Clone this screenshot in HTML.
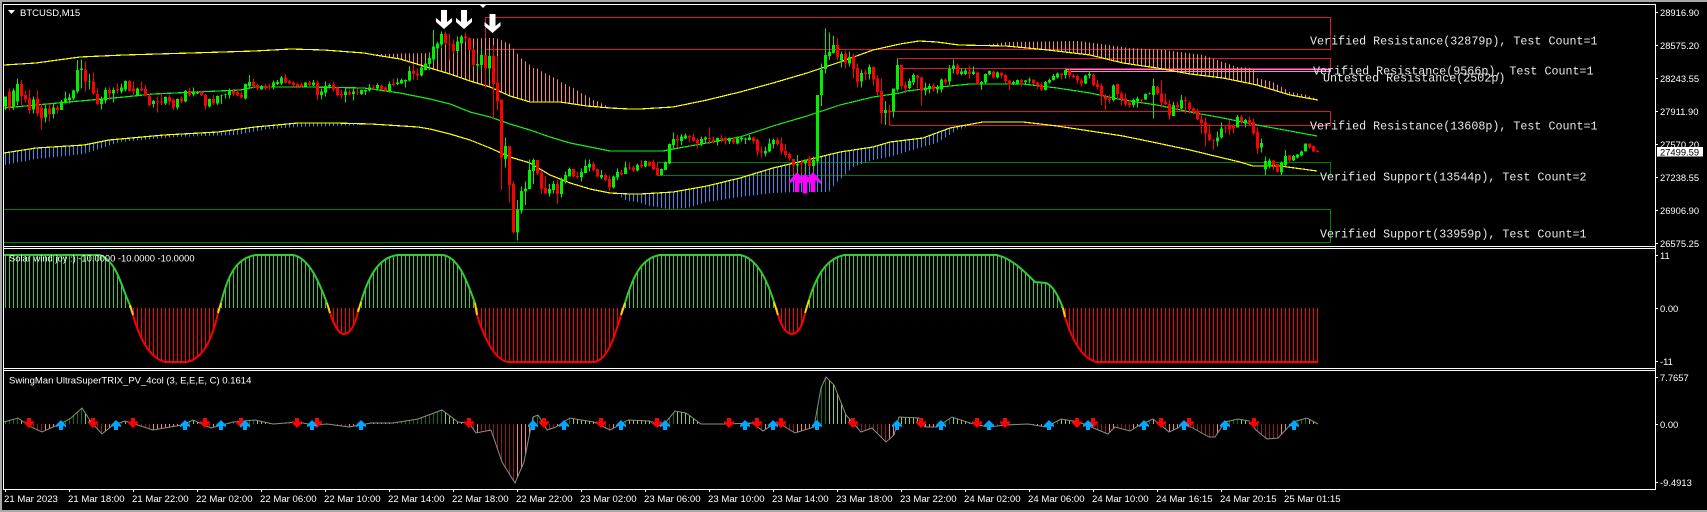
<!DOCTYPE html>
<html><head><meta charset="utf-8"><title>BTCUSD,M15</title>
<style>
html,body{margin:0;padding:0;background:#000;width:1707px;height:512px;overflow:hidden}
svg{display:block;position:absolute;left:0;top:0}
text{font-family:"Liberation Sans",sans-serif;fill:#fff}
.ax{font-size:9.4px}
.xl{font-size:9.6px}
.t{font-size:9.5px}
.m{font-family:"Liberation Mono",monospace;font-size:11.7px;fill:#e8e8e8}
.l{fill:none;shape-rendering:crispEdges;stroke-width:1.2}
</style></head><body>
<svg width="1707" height="512" viewBox="0 0 1707 512" xmlns="http://www.w3.org/2000/svg">
<defs>
<clipPath id="or"><polygon points="378,54 429,53 433,49 441,48 445,43 449,40 465,39 485,38 495,38 501,40 505,42 509,43 513,48 517,53 521,58 525,61 529,64 533,68 537,68 541,71 545,73 549,75 553,77 557,79 561,82 565,84 569,86 573,88 577,90 581,93 585,95 589,97 593,100 597,101 601,103 605,105 609,107 613,108 610,108 587,106 560,102 530,102 510,96 490,87 470,81 450,74 430,68 400,59 375,55"/><polygon points="985,45 1006,42 1079,41 1130,48 1165,50 1203,55 1223,62 1237,67 1253,68 1257,78 1273,82 1290,92 1307,95 1318,100 1290,95 1257,85 1223,78 1190,74 1157,68 1123,63 1090,55 1048,50 1006,46"/></clipPath>
<clipPath id="bl"><polygon points="4,153 36,148 84,145 109,140 164,135 218,132 255,127 298,123 335,123 364,124 364,125 298,127 269,129 236,135 175,137 120,142 84,154 36,159 4,165"/><polygon points="617,194 640,194 657,193 673,192 707,186 740,178 773,168 807,160 840,152 873,147 890,142 923,138 950,128 970,124 970,126 957,130 937,143 919,148 893,156 873,160 853,167 843,177 836,183 829,192 797,192 773,193 740,197 707,202 687,208 669,209 649,206 641,203 625,200"/></clipPath>
<clipPath id="sw"><path d="M4 255H100C118 262 122 290 130 305L133 315C140 340 150 358 165 362H187C205 358 213 335 218 313L221 303C228 275 236 258 256 255H293C310 258 320 285 327 303L330 313C335 328 340 334 344 334C349 334 354 328 358 312L361 302C368 278 378 257 398 255H443C460 258 468 285 475 303L477 315C485 340 495 360 508 362H594C608 360 615 335 621 315L625 303C632 280 640 258 660 255H740C757 258 767 280 774 302L778 315C782 328 787 334 792 334C797 334 802 328 805 313L809 300C815 280 825 258 845 255H997L1003 257C1015 262 1025 272 1035 282L1046 283C1052 285 1058 295 1063 308L1065 317C1072 340 1082 358 1096 362H1318V308H4Z"/></clipPath>
<clipPath id="tr"><polygon points="4,422 18,418 31,427 42,432 62,423 71,418 82,408 91,422 102,434 113,425 125,421 153,430 182,425 193,420 211,428 233,422 255,420 273,424 298,422 313,425 327,424 349,427 371,423 393,423 418,419 442,410 458,422 469,423 476,433 491,430 502,462 515,483 524,462 533,417 538,415 547,430 556,427 570,418 581,420 594,422 610,430 628,420 650,421 657,427 666,422 675,411 686,413 701,424 726,424 752,423 763,431 777,422 795,433 814,427 821,388 826,377 834,385 846,415 861,432 872,428 886,442 894,435 899,417 919,418 925,427 937,427 952,417 970,423 988,427 1006,425 1028,424 1046,427 1061,419 1079,422 1108,434 1115,427 1130,431 1140,425 1153,419 1162,426 1169,432 1178,428 1184,423 1191,427 1209,437 1215,437 1225,422 1238,419 1249,421 1256,430 1267,439 1278,438 1293,422 1307,418 1318,424 1318,424 4,424"/></clipPath>
<clipPath id="ri"><path d="M4 340H18V500H4ZM42 340H82V500H42ZM102 340H125V500H102ZM153 340H193V500H153ZM211 340H255V500H211ZM273 340H298V500H273ZM349 340H371V500H349ZM393 340H442V500H393ZM476 340H479V500H476ZM515 340H538V500H515ZM556 340H570V500H556ZM610 340H628V500H610ZM657 340H675V500H657ZM763 340H777V500H763ZM795 340H826V500H795ZM886 340H899V500H886ZM925 340H952V500H925ZM1028 340H1061V500H1028ZM1108 340H1115V500H1108ZM1130 340H1153V500H1130ZM1169 340H1184V500H1169ZM1215 340H1238V500H1215ZM1278 340H1307V500H1278Z"/></clipPath>
<polygon id="dn" points="-2,0 2,0 2,4 5,3 5,5 0,10 -5,5 -5,3 -2,4" fill="#ff0000"/>
<polygon id="up" points="-2,10 2,10 2,6 5,7 5,5 0,0 -5,5 -5,7 -2,6" fill="#00a8ff"/>
<polygon id="wa" points="-3,0 3,0 3,12 8,8 8,12 0,19 -8,12 -8,8 -3,12" fill="#fff"/>
<polygon id="ma" points="-2.3,20 2.3,20 2.3,8 8,12 8,9 0,0 -8,9 -8,12 -2.3,8" fill="#ff00ff"/>
</defs>

<!-- window chrome -->
<rect x="0" y="0" width="1707" height="2" fill="#a8a8a8"/>
<rect x="0" y="0" width="2" height="512" fill="#a8a8a8"/>
<rect x="0" y="510" width="1707" height="2" fill="#a8a8a8"/>

<g shape-rendering="crispEdges" fill="none">
<!-- zones -->
<rect x="485.5" y="17.5" width="845" height="32" stroke="#dc143c"/>
<rect x="897.5" y="58.5" width="433" height="10" stroke="#dc143c"/>
<rect x="889.5" y="111.5" width="441" height="14" stroke="#dc143c"/>
<rect x="657.5" y="162.5" width="673" height="13" stroke="#008000"/>
<rect x="3.5" y="209.5" width="1327" height="33" stroke="#008000"/>
<rect x="1065.5" y="69.5" width="265" height="2" stroke="#ee82ee"/>
<!-- hist -->
<g clip-path="url(#or)"><line x1="5" x2="1320" y1="100" y2="100" stroke="#f7931e" stroke-width="200" stroke-dasharray="1 3"/></g>
<g clip-path="url(#bl)"><line x1="5" x2="1320" y1="150" y2="150" stroke="#2f8fee" stroke-width="200" stroke-dasharray="1 3"/></g>
</g>

<!-- band lines -->
<polyline class="l" stroke="#ffff00" points="4,65 36,63 80,57 124,55 191,53 255,51 291,49 324,50 364,53 375,55 400,59 430,68 450,74 470,81 490,87 510,96 530,102 560,102 587,106 610,108 630,109 640,109 673,107 707,100 740,92 773,83 807,73 840,62 873,50 900,44 919,41 937,42 959,45 1006,46 1048,50 1090,55 1123,63 1157,68 1190,74 1223,78 1257,85 1290,95 1318,100"/>
<polyline class="l" stroke="#10f010" points="4,108 36,105 80,101 124,97 153,94 240,90 255,87 309,87 364,88 400,93 430,99 450,104 470,112 490,117 510,124 530,130 550,137 570,143 590,147 610,151 640,151 663,151 673,149 707,143 740,137 773,126 807,116 840,105 873,97 900,93 907,91 940,87 970,84 1023,84 1057,88 1090,93 1123,100 1157,105 1190,112 1223,118 1257,125 1290,131 1317,136"/>
<polyline class="l" stroke="#ffff00" points="4,153 36,148 84,145 109,140 164,135 218,132 255,127 298,123 335,123 371,124 418,127 430,129 450,134 470,140 490,148 510,157 530,163 550,175 570,183 590,189 610,193 630,194 640,194 657,193 673,192 707,186 740,178 773,168 807,160 840,152 873,147 890,142 923,138 950,128 983,122 1023,122 1057,126 1090,131 1123,136 1157,143 1190,150 1223,158 1240,162 1253,166 1280,166 1317,171"/>

<!-- candles A -->
<g transform="translate(4.17,50) scale(.33333)" fill="none" shape-rendering="crispEdges">
<path stroke="#00f000" stroke-width="3" d="M4 140V180M28 115V180M40 85V165M88 140V190M124 165V218M148 160V205M172 150V180M184 125V160M196 130V160M208 118V150M220 30V130M232 28V115M256 72V118M292 140V178M304 112V160M328 112V158M352 100V130M364 92V125M400 112V140M448 150V172M484 140V165M520 145V178M544 120V158M568 113V140M580 123V132M616 145V172M640 137V165M652 133V162M664 130V145M676 115V145M724 100V148M736 75V115M772 105V120M808 92V118M820 90V105M832 78V105M904 96V110M928 90V108M952 115V148M964 95V140M976 100V115M1024 115V158M1048 115V152M1072 118V135M1084 118V135M1096 102V125M1120 100V118M1156 95V128M1180 85V105M1192 85V102M1204 88V112M1216 48V95M1252 48V80M1264 35V62M1276 10V60"/>
<path stroke="#00f000" stroke-width="9" d="M4 140V170M28 122V172M40 102V155M88 148V178M124 175V202M148 172V192M172 155V180M184 145V158M196 142V150M208 122V145M220 60V125M232 55V60M256 93V95M292 148V162M304 120V152M328 120V130M352 112V125M364 93V118M400 115V135M448 153V162M484 141V160M520 147V172M544 123V155M568 127V133M580 126V130M616 147V170M640 138V160M652 135V137M664 133V135M676 123V135M724 102V145M736 96V108M772 108V118M808 98V112M820 96V102M832 82V100M904 97V110M928 97V105M952 125V135M964 108V128M976 105V110M1024 125V135M1048 125V132M1072 120V132M1084 120V125M1096 112V122M1120 105V115M1156 102V125M1180 97V102M1192 90V100M1204 90V95M1216 63V92M1252 53V76M1264 40V60M1276 24V42"/>
<path stroke="#ff0000" stroke-width="3" d="M16 115V182M52 90V165M64 122V158M76 120V190M100 122V200M112 160V240M136 160V215M160 165V190M244 35V125M268 68V135M280 115V165M316 112V150M340 100V130M376 90V125M388 95V135M412 95V125M424 105V140M436 130V170M460 140V188M472 130V165M496 135V165M508 145V180M532 140V160M556 113V140M592 122V138M604 132V178M628 135V165M688 120V140M700 120V140M712 125V146M748 85V115M760 100V120M784 100V120M796 100V120M844 72V100M856 90V103M868 95V110M880 98V115M892 98V112M916 93V108M940 92V150M988 95V125M1000 108V140M1012 118V145M1036 118V135M1060 115V135M1108 105V120M1132 103V120M1144 110V125M1168 85V110M1228 40V90M1240 55V90"/>
<path stroke="#ff0000" stroke-width="9" d="M16 125V172M52 102V138M64 135V148M76 145V180M100 145V190M112 172V205M136 175V192M160 172V180M244 58V95M268 95V130M280 132V162M316 120V130M340 117V122M376 93V123M388 115V125M412 115V122M424 117V135M436 137V165M460 155V158M472 155V158M496 141V155M508 150V172M532 146V155M556 123V135M592 125V135M604 135V168M628 147V160M688 123V132M700 126V137M712 133V143M748 96V108M760 105V115M784 108V115M796 110V113M844 82V97M856 93V100M868 97V105M880 102V110M892 103V110M916 97V105M940 97V135M988 103V118M1000 113V135M1012 132V136M1036 127V133M1060 126V128M1108 112V115M1132 107V118M1144 113V122M1168 100V105M1228 63V72M1240 70V76"/>
</g>
<!-- candles B -->
<g transform="translate(430.17,0) scale(.33333)" fill="none" shape-rendering="crispEdges">
<path stroke="#00f000" stroke-width="3" d="M10 90V190M22 125V180M34 95V140M82 110V165M94 105V130M142 160V215M154 145V215M178 150V235M226 412V503M262 600V722M274 560V640M286 545V615M298 478V568M310 475V552M358 552V590M370 543V580M394 533V593M406 515V550M418 503V530M454 505V545M466 478V520M478 478V515M514 510V537M550 527V565M562 505V540M586 485V522M622 490V515M646 482V502"/>
<path stroke="#00f000" stroke-width="9" d="M10 140V178M22 130V145M34 102V133M82 125V153M94 110V130M142 192V197M154 165V195M178 168V205M226 438V477M262 628V698M274 573V632M286 565V575M298 510V567M310 480V513M358 567V580M370 552V570M394 541V582M406 525V543M418 507V530M454 516V532M466 498V519M478 492V502M514 525V532M550 530V562M562 516V532M586 502V522M622 495V512M646 483V500"/>
<path stroke="#ff0000" stroke-width="3" d="M46 95V135M58 100V180M70 120V160M106 98V125M118 112V152M130 145V200M166 165V265M190 135V358M202 170V332M214 298V570M238 438V608M250 545V700M322 480V525M334 512V582M346 528V582M382 540V612M430 507V532M442 516V537M490 484V515M502 507V532M526 520V545M538 527V572M574 510V527M598 487V510M610 498V516M634 480V505M658 484V500"/>
<path stroke="#ff0000" stroke-width="9" d="M46 102V130M58 130V133M70 132V155M106 110V116M118 114V150M130 148V195M166 165V205M190 168V252M202 247V305M214 298V473M238 438V555M250 552V696M322 480V520M334 517V567M346 564V580M382 552V582M430 507V530M442 528V531M490 492V510M502 507V530M526 525V540M538 537V562M574 517V524M598 502V506M610 502V512M634 495V500M658 484V498"/>
</g>
<!-- candles C -->
<g transform="translate(640.17,20) scale(.33333)" fill="none" shape-rendering="crispEdges">
<path stroke="#00f000" stroke-width="3" d="M64 445V466M76 425V450M88 370V432M100 337V385M124 342V375M136 340V357M184 350V378M196 350V372M232 352V377M268 353V372M292 350V373M304 348V365M316 352V372M328 345V362M376 380V410M388 355V397M400 355V385M472 405V460M496 418V458M520 410V452M532 225V428M544 130V258M556 25V160M568 37V120M580 48V100M604 95V143M628 95V140M664 148V203M688 133V178M736 243V315"/>
<path stroke="#00f000" stroke-width="9" d="M64 447V465M76 426V450M88 372V430M100 357V375M124 350V363M136 347V355M184 357V372M196 353V358M232 354V366M268 354V365M292 356V370M304 354V358M316 355V358M328 353V360M376 393V400M388 370V395M400 360V372M472 432V437M496 418V430M520 420V438M532 225V425M544 150V225M556 105V147M568 96V108M580 75V99M604 102V122M628 111V130M664 159V185M688 141V162M736 270V279"/>
<path stroke="#ff0000" stroke-width="3" d="M40 418V450M52 430V467M112 345V382M148 345V368M160 340V365M172 355V385M208 323V372M220 350V370M244 345V367M256 350V373M280 354V372M340 350V370M352 355V410M364 380V413M412 352V378M424 353V403M436 372V412M448 397V422M460 417V460M484 420V460M508 408V440M592 55V120M616 92V145M640 100V175M652 130V203M676 148V182M700 140V197M712 165V228M724 175V312M748 255V313"/>
<path stroke="#ff0000" stroke-width="9" d="M40 426V448M52 444V466M112 357V362M148 348V353M160 351V363M172 360V371M208 354V358M220 358V363M244 354V358M256 354V362M280 358V368M340 353V363M352 360V395M364 395V398M412 360V372M424 370V395M436 393V405M448 402V415M460 417V437M484 430V433M508 415V438M592 75V113M616 102V128M640 108V147M652 144V186M676 158V162M700 141V178M712 175V216M724 213V279M748 272V278"/>
</g>
<!-- candles D -->
<g transform="translate(890.17,50) scale(.33333)" fill="none" shape-rendering="crispEdges">
<path stroke="#00f000" stroke-width="3" d="M10 115V203M22 25V125M58 85V118M70 70V105M106 98V137M118 100V130M142 105V130M154 85V128M178 45V105M190 28V70M214 55V77M226 55V75M250 50V75M274 93V120M286 70V100M298 62V75M322 65V85M370 92V105M382 88V105M406 90V103M418 82V100M466 93V122M478 85V100M490 72V92M502 68V85M526 55V85M586 73V102M598 63V85M670 103V155M730 145V172M742 140V172M766 130V150M778 128V134M790 85V205M850 155V198M874 135V177M982 245V290M994 217V265M1042 195V233M1066 207V232M1114 265V307M1126 320V375M1138 325V355M1174 335V375M1186 300V350M1210 315V333M1222 312V325M1234 302V318M1246 280V305"/>
<path stroke="#00f000" stroke-width="9" d="M10 115V185M22 45V118M58 93V114M70 75V97M106 112V122M118 108V117M142 112V118M154 88V118M178 57V95M190 47V57M214 65V72M226 62V72M250 65V72M274 96V102M286 72V98M298 63V73M322 67V82M370 96V102M382 90V102M406 91V96M418 88V92M466 96V120M478 90V98M490 78V90M502 71V83M526 60V75M586 76V100M598 72V77M670 107V150M730 150V165M742 145V153M766 132V148M778 130V132M790 108V135M850 165V198M874 150V175M982 262V275M994 235V263M1042 201V232M1066 210V220M1114 279V293M1126 333V358M1138 332V350M1174 337V368M1186 318V345M1210 318V332M1222 313V322M1234 304V317M1246 280V305"/>
<path stroke="#ff0000" stroke-width="3" d="M34 45V118M46 95V130M82 75V115M94 80V167M130 100V125M166 85V105M202 40V75M238 47V85M262 65V105M310 63V85M334 67V85M346 72V100M358 90V120M394 87V110M430 88V103M442 95V117M454 97V123M514 70V88M538 57V85M550 72V85M562 75V100M574 85V110M610 70V110M622 90V118M634 100V165M646 132V180M658 135V160M682 100V150M694 125V165M706 130V170M718 150V172M754 147V158M802 108V135M814 90V172M826 130V165M838 150V208M862 155V183M886 140V190M898 155V190M910 172V192M922 175V210M934 190V250M946 203V290M958 225V275M970 268V300M1006 225V250M1018 210V255M1030 222V250M1054 195V222M1078 200V230M1090 205V255M1102 232V312M1150 330V362M1162 340V367M1198 315V335M1258 280V295M1270 287V306M1282 301V308"/>
<path stroke="#ff0000" stroke-width="9" d="M34 45V108M46 105V116M82 77V84M94 82V122M130 107V118M166 88V97M202 47V72M238 65V72M262 67V102M310 64V83M334 67V77M346 75V93M358 91V103M394 90V97M430 89V101M442 97V107M454 104V118M514 71V75M538 60V77M550 76V81M562 78V92M574 91V100M610 75V105M622 102V111M634 108V140M646 140V148M658 145V150M682 102V132M694 130V148M706 145V163M718 158V165M754 148V152M802 109V130M814 130V158M826 155V163M838 162V197M862 165V173M886 150V153M898 157V178M910 175V186M922 185V208M934 208V219M946 216V250M958 250V270M970 268V272M1006 232V235M1018 228V238M1030 228V235M1054 201V215M1078 210V222M1090 216V250M1102 246V295M1150 331V346M1162 342V366M1198 317V332M1258 280V292M1270 288V305M1282 302V306"/>
</g>

<!-- white down arrows -->
<use href="#wa" x="444" y="10"/><use href="#wa" x="464" y="10"/><use href="#wa" x="492.5" y="14"/>
<polygon points="480,5 486,5 483,8" fill="#fff"/>
<!-- magenta up arrows -->
<use href="#ma" x="797" y="172"/><use href="#ma" x="813" y="172"/><use href="#ma" x="805" y="173.5"/>

<!-- Solar wind panel -->
<g clip-path="url(#sw)" shape-rendering="crispEdges">
<line x1="5" x2="1320" y1="281.5" y2="281.5" stroke="#32cd32" stroke-width="53" stroke-dasharray="1 3"/>
<line x1="5" x2="1320" y1="335" y2="335" stroke="#ff0000" stroke-width="54" stroke-dasharray="1 3"/>
</g>
<g fill="none" stroke-width="2">
<path stroke="#32cd32" d="M4 255H100C118 262 122 290 130 305M221 303C228 275 236 258 256 255H293C310 258 320 285 327 303M361 302C368 278 378 257 398 255H443C460 258 468 285 475 303M625 303C632 280 640 258 660 255H740C757 258 767 280 774 302M809 300C815 280 825 258 845 255H997L1003 257C1015 262 1025 272 1035 282L1046 283C1052 285 1058 295 1063 308"/>
<path stroke="#ffd700" d="M130 305L133 315M218 313L221 303M327 303L330 313M358 312L361 302M475 303L477 315M621 315L625 303M774 302L778 315M805 313L809 300M1063 308L1065 317"/>
<path stroke="#ff0000" d="M133 315C140 340 150 358 165 362H187C205 358 213 335 218 313M330 313C335 328 340 334 344 334C349 334 354 328 358 312M477 315C485 340 495 360 508 362H594C608 360 615 335 621 315M778 315C782 328 787 334 792 334C797 334 802 328 805 313M1065 317C1072 340 1082 358 1096 362H1318"/>
</g>

<!-- TRIX panel -->
<g clip-path="url(#tr)" shape-rendering="crispEdges">
<line x1="5" x2="1320" y1="382" y2="382" stroke="#9acd32" stroke-width="84" stroke-dasharray="1 3"/>
<line x1="5" x2="1320" y1="457" y2="457" stroke="#8b1a1a" stroke-width="66" stroke-dasharray="1 3"/>
<g clip-path="url(#ri)">
<line x1="5" x2="1320" y1="382" y2="382" stroke="#0a7008" stroke-width="84" stroke-dasharray="1 3"/>
<line x1="5" x2="1320" y1="457" y2="457" stroke="#fa8072" stroke-width="66" stroke-dasharray="1 3"/>
</g></g>
<polyline fill="none" stroke="#8c8c8c" stroke-width="1" points="4,422 18,418 31,427 42,432 62,423 71,418 82,408 91,422 102,434 113,425 125,421 153,430 182,425 193,420 211,428 233,422 255,420 273,424 298,422 313,425 327,424 349,427 371,423 393,423 418,419 442,410 458,422 469,423 476,433 491,430 502,462 515,483 524,462 533,417 538,415 547,430 556,427 570,418 581,420 594,422 610,430 628,420 650,421 657,427 666,422 675,411 686,413 701,424 726,424 752,423 763,431 777,422 795,433 814,427 821,388 826,377 834,385 846,415 861,432 872,428 886,442 894,435 899,417 919,418 925,427 937,427 952,417 970,423 988,427 1006,425 1028,424 1046,427 1061,419 1079,422 1108,434 1115,427 1130,431 1140,425 1153,419 1162,426 1169,432 1178,428 1184,423 1191,427 1209,437 1215,437 1225,422 1238,419 1249,421 1256,430 1267,439 1278,438 1293,422 1307,418 1318,424"/>
<g>
<use href="#dn" x="29" y="418"/><use href="#dn" x="93" y="418"/><use href="#dn" x="133" y="418"/><use href="#dn" x="205" y="418"/><use href="#dn" x="241" y="418"/><use href="#dn" x="297" y="418"/><use href="#dn" x="317" y="418"/><use href="#dn" x="469" y="418"/><use href="#dn" x="544" y="418"/><use href="#dn" x="601" y="418"/><use href="#dn" x="657" y="418"/><use href="#dn" x="729" y="418"/><use href="#dn" x="757" y="418"/><use href="#dn" x="781" y="418"/><use href="#dn" x="853" y="418"/><use href="#dn" x="921" y="418"/><use href="#dn" x="977" y="418"/><use href="#dn" x="1005" y="418"/><use href="#dn" x="1077" y="418"/><use href="#dn" x="1093" y="418"/><use href="#dn" x="1161" y="418"/><use href="#dn" x="1189" y="418"/><use href="#dn" x="1254" y="418"/>
<use href="#up" x="61" y="420"/><use href="#up" x="116" y="420"/><use href="#up" x="185" y="420"/><use href="#up" x="221" y="420"/><use href="#up" x="245" y="420"/><use href="#up" x="312" y="420"/><use href="#up" x="361" y="420"/><use href="#up" x="533" y="420"/><use href="#up" x="564" y="420"/><use href="#up" x="621" y="420"/><use href="#up" x="665" y="420"/><use href="#up" x="745" y="420"/><use href="#up" x="773" y="420"/><use href="#up" x="817" y="420"/><use href="#up" x="897" y="420"/><use href="#up" x="941" y="420"/><use href="#up" x="989" y="420"/><use href="#up" x="1049" y="420"/><use href="#up" x="1088" y="420"/><use href="#up" x="1144" y="420"/><use href="#up" x="1184" y="420"/><use href="#up" x="1225" y="420"/><use href="#up" x="1294" y="420"/>
</g>

<!-- frame lines -->
<g shape-rendering="crispEdges" stroke="#fff" fill="none">
<path d="M3 4.5H1655.5V489.5H3.5V4.5"/>
<path d="M3 246.5H1655M3 248.5H1655M3 368.5H1655M3 370.5H1655"/>
<path d="M1655 12.5h3M1655 45.5h3M1655 78.5h3M1655 111.5h3M1655 144.5h3M1655 177.5h3M1655 210.5h3M1655 243.5h3M1655 255.5h3M1655 308.5h3M1655 361.5h3M1655 377.5h3M1655 424.5h3M1655 482.5h3"/>
<path d="M5.5 489v3M69.5 489v3M133.5 489v3M197.5 489v3M261.5 489v3M325.5 489v3M389.5 489v3M453.5 489v3M517.5 489v3M581.5 489v3M645.5 489v3M709.5 489v3M773.5 489v3M837.5 489v3M901.5 489v3M965.5 489v3M1029.5 489v3M1093.5 489v3M1157.5 489v3M1221.5 489v3M1285.5 489v3"/>
</g>

<!-- titles -->
<polygon points="8,10 15,10 11.5,14" fill="#fff"/>
<text class="t" x="20" y="16">BTCUSD,M15</text>
<text class="t" x="9" y="261.5" style="font-size:9.4px">Solar wind joy :) -10.0000 -10.0000 -10.0000</text>
<text class="t" x="9" y="383.5">SwingMan UltraSuperTRIX_PV_4col (3, E,E,E, C) 0.1614</text>

<!-- level labels -->
<text class="m" x="1310" y="44.5">Verified Resistance(32879p), Test Count=1</text>
<text class="m" x="1313" y="74.5">Verified Resistance(9566p), Test Count=1</text>
<text class="m" x="1323" y="81.5">Untested Resistance(2502p)</text>
<text class="m" x="1310" y="129.5">Verified Resistance(13608p), Test Count=1</text>
<text class="m" x="1320" y="180.5">Verified Support(13544p), Test Count=2</text>
<text class="m" x="1320" y="237.5">Verified Support(33959p), Test Count=1</text>

<!-- price axis -->
<text class="ax" x="1660" y="16">28916.90</text>
<text class="ax" x="1660" y="49">28575.20</text>
<text class="ax" x="1660" y="82">28243.55</text>
<text class="ax" x="1660" y="115">27911.90</text>
<text class="ax" x="1660" y="148">27570.20</text>
<rect x="1657" y="147" width="46" height="9.5" fill="#fff"/>
<text class="ax" x="1660" y="155.5" style="fill:#000">27499.59</text>
<text class="ax" x="1660" y="181">27238.55</text>
<text class="ax" x="1660" y="214">26906.90</text>
<text class="ax" x="1660" y="247">26575.25</text>
<text class="ax" x="1660" y="259">11</text>
<text class="ax" x="1660" y="312">0.00</text>
<text class="ax" x="1660" y="365">-11</text>
<text class="ax" x="1660" y="381">7.7657</text>
<text class="ax" x="1660" y="428">0.00</text>
<text class="ax" x="1660" y="486">-9.4913</text>

<!-- time axis -->
<text class="xl" x="4" y="502">21 Mar 2023</text>
<text class="xl" x="68" y="502">21 Mar 18:00</text>
<text class="xl" x="132" y="502">21 Mar 22:00</text>
<text class="xl" x="196" y="502">22 Mar 02:00</text>
<text class="xl" x="260" y="502">22 Mar 06:00</text>
<text class="xl" x="324" y="502">22 Mar 10:00</text>
<text class="xl" x="388" y="502">22 Mar 14:00</text>
<text class="xl" x="452" y="502">22 Mar 18:00</text>
<text class="xl" x="516" y="502">22 Mar 22:00</text>
<text class="xl" x="580" y="502">23 Mar 02:00</text>
<text class="xl" x="644" y="502">23 Mar 06:00</text>
<text class="xl" x="708" y="502">23 Mar 10:00</text>
<text class="xl" x="772" y="502">23 Mar 14:00</text>
<text class="xl" x="836" y="502">23 Mar 18:00</text>
<text class="xl" x="900" y="502">23 Mar 22:00</text>
<text class="xl" x="964" y="502">24 Mar 02:00</text>
<text class="xl" x="1028" y="502">24 Mar 06:00</text>
<text class="xl" x="1092" y="502">24 Mar 10:00</text>
<text class="xl" x="1156" y="502">24 Mar 16:15</text>
<text class="xl" x="1220" y="502">24 Mar 20:15</text>
<text class="xl" x="1284" y="502">25 Mar 01:15</text>
</svg>
</body></html>
